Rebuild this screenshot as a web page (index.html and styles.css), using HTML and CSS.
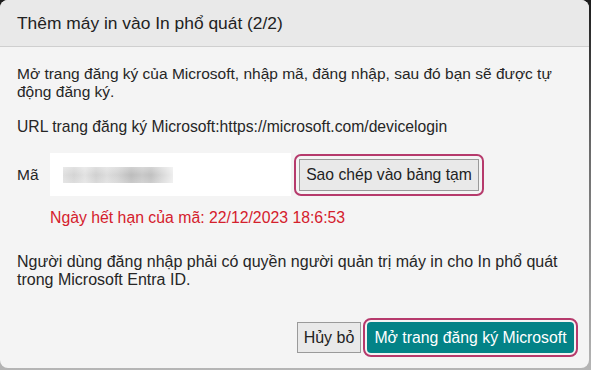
FILE: index.html
```html
<!DOCTYPE html>
<html lang="vi">
<head>
    <meta charset="UTF-8">
    <meta name="viewport" content="width=device-width, initial-scale=1.0">
    <title>Thêm máy in vào In phổ quát</title>
    <link rel="stylesheet" href="styles.css">
</head>
<body>
    <div class="dialog">
        <div class="dialog-header">Thêm máy in vào In phổ quát (2/2)</div>
        <div class="dialog-body">
            <p class="intro">Mở trang đăng ký của Microsoft, nhập mã, đăng nhập, sau đó bạn sẽ được tự động đăng ký.</p>
            <p class="url">URL trang đăng ký Microsoft:https://microsoft.com/devicelogin</p>
            <div class="code-row">
                <label class="code-label">Mã</label>
                <div class="code-box">
                    <div class="code-blur"></div>
                </div>
                <div class="focus-ring">
                    <button class="plain-button copy-button">Sao chép vào bảng tạm</button>
                </div>
            </div>
            <p class="expiry">Ngày hết hạn của mã: 22/12/2023 18:6:53</p>
            <p class="note">Người dùng đăng nhập phải có quyền người quản trị máy in cho In phổ quát trong Microsoft Entra ID.</p>
        </div>
        <div class="dialog-footer">
            <button class="plain-button cancel-button">Hủy bỏ</button>
            <div class="focus-ring">
                <button class="primary-button">Mở trang đăng ký Microsoft</button>
            </div>
        </div>
    </div>
</body>
</html>
```

FILE: styles.css
```css
html, body {
    margin: 0;
    height: 370px;
    overflow: hidden;
}

body {
    font-family: 'Liberation Sans', Arial, sans-serif;
    background: linear-gradient(#1c1c1c, #6a6a6a 40%, #b5b5b5);
    color: #262626;
}

.dialog {
    width: 589px;
    height: 368px;
    display: flex;
    flex-direction: column;
    background: #f4f4f4;
    border-radius: 8px;
    overflow: hidden;
}

.dialog-header {
    height: 46px;
    flex-shrink: 0;
    display: flex;
    align-items: center;
    padding: 0 17px;
    background: #e9e9e9;
    border-bottom: 1px solid #cfcfcf;
    font-size: 17.4px;
    color: #222;
}

.dialog-body {
    flex: 1;
    padding: 18px 17px 0;
    font-size: 15.5px;
    line-height: 18px;
}

.dialog-body p {
    margin: 0;
}

.url {
    margin-top: 17px !important;
    font-size: 15.7px;
}

.code-row {
    display: flex;
    align-items: center;
    margin-top: 17px;
}

.code-label {
    width: 33px;
}

.code-box {
    width: 241px;
    height: 43px;
    background: #ffffff;
    display: flex;
    align-items: center;
    padding-left: 13px;
    box-sizing: border-box;
}

.code-blur {
    width: 110px;
    height: 16px;
    background:
        linear-gradient(rgba(255, 255, 255, 0.3), rgba(255, 255, 255, 0) 50%, rgba(255, 255, 255, 0.2)),
        linear-gradient(to right, #e0e0e0 0, #d4d4d4 10%, #e2e2e2 20%, #d0d0d0 30%, #dddddd 40%, #d2d2d2 50%, #bcbcbc 62%, #c8c8c8 72%, #c0c0c0 80%, #d8d8d8 90%, #eeeeee 100%);
}

.focus-ring {
    border: 2px solid #b63a6c;
    border-radius: 7px;
    padding: 3px;
    display: flex;
}

.code-row .focus-ring {
    margin-left: 3px;
}

.plain-button {
    font-family: 'Liberation Sans', Arial, sans-serif;
    background: #e9e9e9;
    border: 1px solid #9a9a9a;
    color: #222;
    margin: 0;
    padding: 0;
    height: 32px;
    font-size: 15.7px;
}

.copy-button {
    width: 180px;
}

.expiry {
    margin: 13px 0 0 33px !important;
    color: #d4202c;
    font-size: 15.8px;
}

.note {
    margin-top: 26px !important;
    font-size: 16px;
}

.dialog-footer {
    display: flex;
    justify-content: flex-end;
    align-items: center;
    gap: 2px;
    padding: 0 11px 11px 0;
}

.cancel-button {
    width: 64px;
    height: 31px;
    font-size: 16px;
}

.primary-button {
    font-family: 'Liberation Sans', Arial, sans-serif;
    width: 207px;
    height: 31px;
    margin: 0;
    padding: 0;
    background: #038387;
    border: none;
    border-radius: 4px;
    color: #ffffff;
    font-size: 15.8px;
}

.dialog-footer .focus-ring {
    border-radius: 8px;
    padding: 2px;
}
```
